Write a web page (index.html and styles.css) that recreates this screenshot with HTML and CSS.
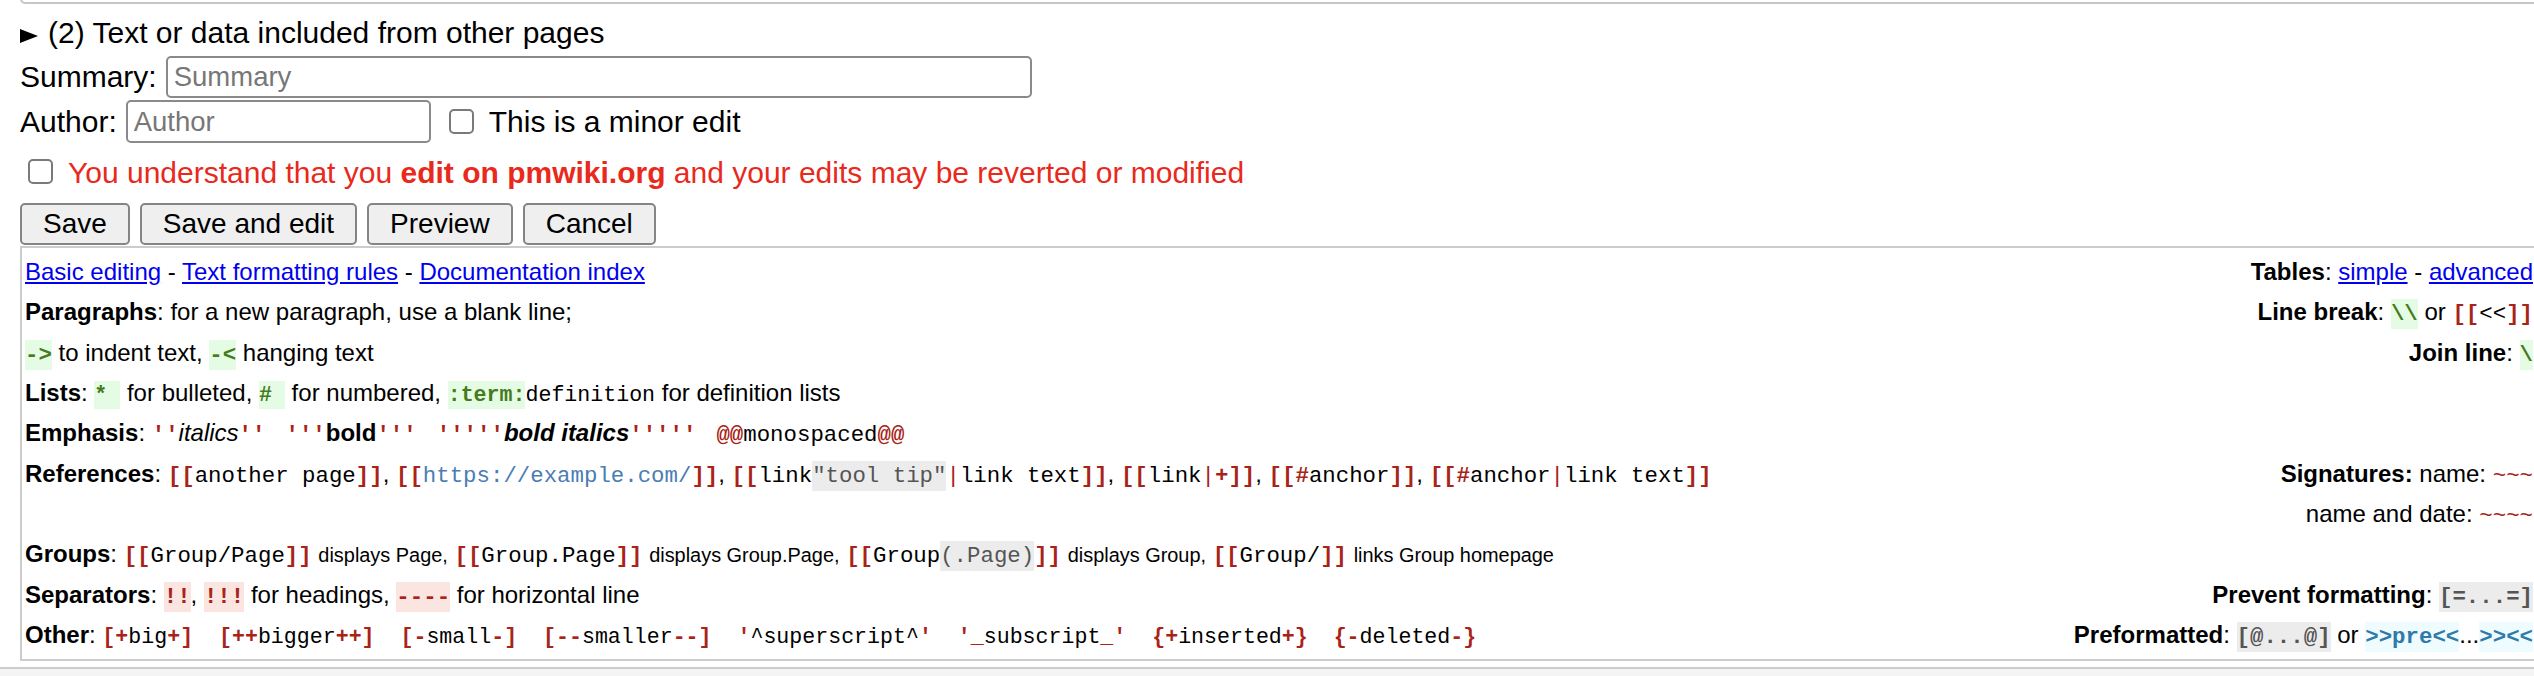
FILE: index.html
```html
<!DOCTYPE html>
<html lang="en">
<head>
<meta charset="utf-8">
<title>Edit</title>
<link rel="stylesheet" href="styles.css">
</head>
<body>
<div class="page">
  <div class="ta"></div>
  <div class="disclose"><span class="tri"></span>(2) Text or data included from other pages</div>
  <div class="row row-sum">
    <label class="lbl">Summary:</label>
    <input class="inp inp-sum" type="text" placeholder="Summary">
  </div>
  <div class="row row-auth">
    <label class="lbl">Author:</label>
    <input class="inp inp-auth" type="text" placeholder="Author">
    <input class="cb cb-minor" type="checkbox">
    <span>This is a minor edit</span>
  </div>
  <div class="row row-warn">
    <input class="cb cb-warn" type="checkbox">
    <span class="warn">You understand that you <b>edit on pmwiki.org</b> and your edits may be reverted or modified</span>
  </div>
  <div class="btns">
    <button class="btn">Save</button>
    <button class="btn">Save and edit</button>
    <button class="btn">Preview</button>
    <button class="btn">Cancel</button>
  </div>
  <div class="help">
    <div class="qr">
      <div class="l"><a href="#">Basic editing</a> - <a href="#">Text formatting rules</a> - <a href="#">Documentation index</a></div>
      <div class="rt"><b>Tables</b>: <a href="#">simple</a> - <a href="#">advanced</a></div>

      <div class="l"><b>Paragraphs</b>: for a new paragraph, use a blank line;</div>
      <div class="rt"><b>Line break</b>: <code class="c g">\\</code> or <code class="c"><span class="r">[[</span>&lt;&lt;<span class="r">]]</span></code></div>

      <div class="l"><code class="c g">-&gt;</code> to indent text, <code class="c g">-&lt;</code> hanging text</div>
      <div class="rt"><b>Join line</b>: <code class="c g">\</code></div>

      <div class="l lists"><b>Lists</b>: <code class="c g">*&nbsp;</code> for bulleted, <code class="c g">#&nbsp;</code> for numbered, <code class="c g">:term:</code><code class="c">definition</code> for definition lists</div>
      <div class="rt"></div>

      <div class="l"><b>Emphasis</b>: <code class="c r">''</code><i>italics</i><code class="c r">''</code>&nbsp;&nbsp; <code class="c r">'''</code><b>bold</b><code class="c r">'''</code>&nbsp;&nbsp; <code class="c r">'''''</code><b><i>bold italics</i></b><code class="c r">'''''</code>&nbsp;&nbsp; <code class="c"><span class="r">@@</span>monospaced<span class="r">@@</span></code></div>
      <div class="rt"></div>

      <div class="l"><b>References</b>: <code class="c"><span class="r">[[</span>another page<span class="r">]]</span></code>, <code class="c"><span class="r">[[</span><span class="bl">https://example.com/</span><span class="r">]]</span></code>, <code class="c"><span class="r">[[</span>link<span class="gr">"tool tip"</span><span class="r n">|</span>link text<span class="r">]]</span></code>, <code class="c"><span class="r">[[</span>link<span class="r n">|</span><span class="r">+]]</span></code>, <code class="c"><span class="r">[[#</span>anchor<span class="r">]]</span></code>, <code class="c"><span class="r">[[#</span>anchor<span class="r n">|</span>link text<span class="r">]]</span></code></div>
      <div class="rt"><b>Signatures:</b> name: <code class="c r n">~~~</code><br>name and date: <code class="c r n">~~~~</code></div>

      <div class="l"><b>Groups</b>: <code class="c"><span class="r">[[</span>Group/Page<span class="r">]]</span></code> <span class="sm">displays Page,</span> <code class="c"><span class="r">[[</span>Group.Page<span class="r">]]</span></code> <span class="sm">displays Group.Page,</span> <code class="c"><span class="r">[[</span>Group<span class="gr">(.Page)</span><span class="r">]]</span></code> <span class="sm">displays Group,</span> <code class="c"><span class="r">[[</span>Group/<span class="r">]]</span></code> <span class="sm">links Group homepage</span></div>
      <div class="rt"></div>

      <div class="l"><b>Separators</b>: <code class="c p">!!</code>, <code class="c p">!!!</code> for headings, <code class="c p">----</code> for horizontal line</div>
      <div class="rt"><b>Prevent formatting</b>: <code class="c gy">[=...=]</code></div>

      <div class="l"><b>Other</b>: <code class="c pre"><span class="r">[+</span>big<span class="r">+]</span>  <span class="r">[++</span>bigger<span class="r">++]</span>  <span class="r">[-</span>small<span class="r">-]</span>  <span class="r">[--</span>smaller<span class="r">--]</span>  <span class="r">'</span>^superscript^<span class="r">'</span>  <span class="r">'_</span>subscript<span class="r">_'</span>  <span class="r">{+</span>inserted<span class="r">+}</span>  <span class="r">{-</span>deleted<span class="r">-}</span></code></div>
      <div class="rt"><b>Preformatted</b>: <code class="c gy">[@...@]</code> or <code class="c cy">&gt;&gt;pre&lt;&lt;</code>...<code class="c cy">&gt;&gt;&lt;&lt;</code></div>
    </div>
  </div>
</div>
<div class="foot"></div>
</body>
</html>
```

FILE: styles.css
```css
html, body {
  margin: 0;
  padding: 0;
  overflow: hidden;
  background: #fff;
}
body {
  font-family: "Liberation Sans", Arial, sans-serif;
  font-size: 30px;
  color: #000;
}
.page {
  padding-left: 20px;
  width: 2518px;
}
.ta {
  height: 18px;
  margin-top: -18px;
  border: 2px solid #c6c6c6;
  border-radius: 0 0 5px 5px;
  background: #fff;
}
.disclose {
  margin-top: 12px;
  height: 34px;
  line-height: 34px;
  white-space: nowrap;
}
.tri {
  display: inline-block;
  width: 0;
  height: 0;
  border-left: 18px solid #000;
  border-top: 7.5px solid transparent;
  border-bottom: 7.5px solid transparent;
  margin-right: 10px;
}
.row {
  display: flex;
  align-items: center;
  white-space: nowrap;
}
.row-sum {
  margin-top: 6px;
  height: 42px;
}
.row-auth {
  margin-top: 2px;
  height: 43px;
}
.row-warn {
  height: 46px;
  margin-top: 7px;
}
.lbl {
  margin-right: 9px;
}
.inp {
  box-sizing: border-box;
  height: 100%;
  border: 2px solid #8a8a8a;
  border-radius: 5px;
  font-family: "Liberation Sans", Arial, sans-serif;
  font-size: 27.5px;
  padding: 0 6px;
  margin: 0;
  background: #fff;
  outline: none;
}
.inp::placeholder {
  color: #777;
}
.inp-sum {
  width: 866px;
}
.inp-auth {
  width: 305px;
}
.cb {
  appearance: none;
  -webkit-appearance: none;
  box-sizing: border-box;
  width: 25px;
  height: 25px;
  border: 2px solid #7a7a7a;
  border-radius: 5px;
  background: #fff;
  margin: 0;
}
.cb-minor {
  margin-left: 18px;
  margin-right: 15px;
}
.cb-warn {
  margin-left: 8px;
  margin-right: 15px;
  margin-bottom: 4px;
}
.warn {
  color: #e8291c;
}
.btns {
  display: flex;
  gap: 10px;
  margin-top: 7px;
}
.btn {
  box-sizing: border-box;
  height: 42px;
  padding: 0 21px;
  border: 2px solid #858585;
  border-radius: 5px;
  background: #efefef;
  font-family: "Liberation Sans", Arial, sans-serif;
  font-size: 28px;
  color: #000;
  margin: 0;
}
.help {
  margin-top: 1px;
  border: 2px solid #cccccc;
  padding: 4px 3px;
  font-size: 24px;
  background: #fff;
}
.qr {
  display: grid;
  grid-template-columns: 1fr auto;
  line-height: 40.33px;
  white-space: nowrap;
}
.qr code,
.qr .sm {
  line-height: 20px;
}
.rt {
  text-align: right;
}
.qr a {
  color: #0000ee;
  text-decoration: underline;
}
.c {
  font-family: "Liberation Mono", "Courier New", monospace;
  font-size: 0.933em;
}
.c.pre,
.lists .c {
  font-size: 0.9em;
}
.c.pre {
  white-space: pre;
}
.r {
  color: #a82418;
  font-weight: bold;
}
.n {
  font-weight: normal;
}
.g {
  color: #467a1d;
  background: #e4fce4;
  font-weight: bold;
  padding: 2px 0;
}
.p {
  color: #a82418;
  background: #fbe5e0;
  font-weight: bold;
  padding: 2px 0;
}
.gr {
  color: #555;
  background: #ececec;
  padding: 2px 0;
}
.gy {
  color: #555;
  background: #ececec;
  font-weight: bold;
  padding: 2px 0;
}
.bl {
  color: #4a7db3;
}
.cy {
  color: #2f7aa6;
  background: #eefcff;
  font-weight: bold;
  padding: 2px 0;
}
.sm {
  font-size: 0.83em;
}
.foot {
  margin-top: 6px;
  border-top: 2px solid #cccccc;
  background: #f4f4f4;
  height: 30px;
}
```
